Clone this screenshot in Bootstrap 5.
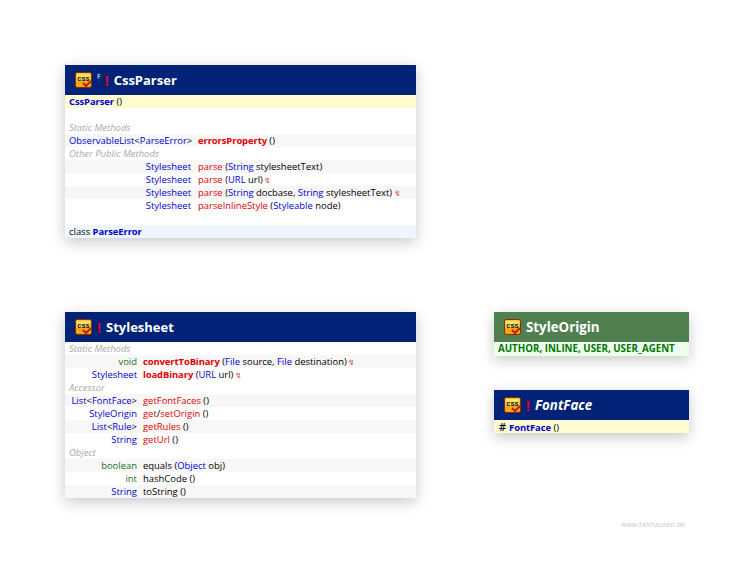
<!DOCTYPE html>
<html lang="en">
<head>
<meta charset="utf-8">
<title>Class diagram</title>
<link href="https://cdn.jsdelivr.net/npm/bootstrap@5.3.0/dist/css/bootstrap.min.css" rel="stylesheet">
<style>
html,body{background:#fff;margin:0}
.canvas{position:relative;width:745px;height:571px;overflow:hidden;font-family:"Open Sans","Noto Sans","Liberation Sans",sans-serif;font-size:9.45px;line-height:13px;color:#000;}
.node{position:absolute;background:#fff;box-shadow:0 4px 14px rgba(0,0,0,.22)}
.n1{left:65px;top:65px;width:351px}
.n2{left:65px;top:312px;width:351px}
.n3{left:494px;top:312px;width:195px}
.n4{left:494px;top:390px;width:195px}
.head{height:30px;background:#002277;color:#fff;font-size:13px;font-weight:700;padding-left:10px;gap:5px}
.head.green{background:#508050;gap:5px}
.head svg{flex:none}
.bang{color:#e0002a;font-weight:700;font-size:14px}
.fin{font-size:7px;line-height:9px;align-self:flex-start;margin-top:7px;margin-right:-1px;font-weight:400}
.ln{display:grid;height:13px;white-space:nowrap;padding-left:4px;align-items:center}
.w1 .ln{grid-template-columns:122px 1fr;column-gap:7px}
.w2 .ln{grid-template-columns:68px 1fr;column-gap:6px}
.ln.full{display:block}
.alt{background:#f7f7f7}
.ty{text-align:right}
.sec{color:#a8a8a8;font-style:italic}
.k{color:#0000d0}
.r{color:#e00000}
.g{color:#207020}
.b{font-weight:700;letter-spacing:-.1px}
.ctor{background:#fffbd0}
.cls{background:#eef6ff}
.en{background:#eeffee;color:#007700;font-weight:700;height:14px;font-size:9.75px}
.zz{color:#e05050;font-size:8px;margin-left:-1px}
.hash{font-size:11px;font-weight:600;color:#000;margin:0 3px 0 1px}
.wm{position:absolute;left:621px;top:520px;font-size:7px;line-height:10px;color:#c9c9d6}
.ico text{font-family:"Liberation Sans",sans-serif;font-size:7.5px;font-weight:700;fill:#111}
.big{font-size:13.3px}
</style>
</head>
<body>
<div class="canvas">

<div class="node n1 w1">
<div class="head d-flex align-items-center"><svg class="ico" width="17" height="16" viewBox="0 0 17 16"><rect x=".5" y=".5" width="16" height="15" rx="2" fill="#f0a818" stroke="#902800"/><rect x="1.5" y="1.5" width="14" height="7" fill="#ffe060"/><path d="M8 11l3 3 5-5" fill="none" stroke="#c02000" stroke-width="2"/><text x="8.5" y="9" text-anchor="middle">css</text></svg><span class="fin">F</span><span class="bang">!</span><span>CssParser</span></div>
<div class="ln full ctor"><span class="k b">CssParser</span> ()</div>
<div class="ln"></div>
<div class="ln full sec">Static Methods</div>
<div class="ln alt"><span class="ty"><span class="k">ObservableList</span>&lt;<span class="k">ParseError</span>&gt;</span><span><span class="r b">errorsProperty</span> ()</span></div>
<div class="ln full sec">Other Public Methods</div>
<div class="ln alt"><span class="ty k">Stylesheet</span><span><span class="r">parse</span> (<span class="k">String</span> stylesheetText)</span></div>
<div class="ln"><span class="ty k">Stylesheet</span><span><span class="r">parse</span> (<span class="k">URL</span> url) <span class="zz">↯</span></span></div>
<div class="ln alt"><span class="ty k">Stylesheet</span><span><span class="r">parse</span> (<span class="k">String</span> docbase, <span class="k">String</span> stylesheetText) <span class="zz">↯</span></span></div>
<div class="ln"><span class="ty k">Stylesheet</span><span><span class="r">parseInlineStyle</span> (<span class="k">Styleable</span> node)</span></div>
<div class="ln"></div>
<div class="ln full cls">class <span class="k b">ParseError</span></div>
</div>

<div class="node n2 w2">
<div class="head d-flex align-items-center"><svg class="ico" width="17" height="16" viewBox="0 0 17 16"><rect x=".5" y=".5" width="16" height="15" rx="2" fill="#f0a818" stroke="#902800"/><rect x="1.5" y="1.5" width="14" height="7" fill="#ffe060"/><path d="M8 11l3 3 5-5" fill="none" stroke="#c02000" stroke-width="2"/><text x="8.5" y="9" text-anchor="middle">css</text></svg><span class="bang">!</span><span>Stylesheet</span></div>
<div class="ln full sec">Static Methods</div>
<div class="ln alt"><span class="ty g">void</span><span><span class="r b">convertToBinary</span> (<span class="k">File</span> source, <span class="k">File</span> destination) <span class="zz">↯</span></span></div>
<div class="ln"><span class="ty k">Stylesheet</span><span><span class="r b">loadBinary</span> (<span class="k">URL</span> url) <span class="zz">↯</span></span></div>
<div class="ln full sec">Accessor</div>
<div class="ln alt"><span class="ty"><span class="k">List</span>&lt;<span class="k">FontFace</span>&gt;</span><span><span class="r">getFontFaces</span> ()</span></div>
<div class="ln"><span class="ty k">StyleOrigin</span><span><span class="r">get</span>/<span class="r">setOrigin</span> ()</span></div>
<div class="ln alt"><span class="ty"><span class="k">List</span>&lt;<span class="k">Rule</span>&gt;</span><span><span class="r">getRules</span> ()</span></div>
<div class="ln"><span class="ty k">String</span><span><span class="r">getUrl</span> ()</span></div>
<div class="ln full sec">Object</div>
<div class="ln alt"><span class="ty g">boolean</span><span>equals (<span class="k">Object</span> obj)</span></div>
<div class="ln"><span class="ty g">int</span><span>hashCode ()</span></div>
<div class="ln alt"><span class="ty k">String</span><span>toString ()</span></div>
</div>

<div class="node n3">
<div class="head green d-flex align-items-center"><svg class="ico" width="17" height="16" viewBox="0 0 17 16"><rect x=".5" y=".5" width="16" height="15" rx="2" fill="#f0a818" stroke="#902800"/><rect x="1.5" y="1.5" width="14" height="7" fill="#ffe060"/><path d="M8 11l3 3 5-5" fill="none" stroke="#c02000" stroke-width="2"/><text x="8.5" y="9" text-anchor="middle">css</text></svg><span class="big">StyleOrigin</span></div>
<div class="ln full en">AUTHOR, INLINE, USER, USER_AGENT</div>
</div>

<div class="node n4">
<div class="head d-flex align-items-center"><svg class="ico" width="17" height="16" viewBox="0 0 17 16"><rect x=".5" y=".5" width="16" height="15" rx="2" fill="#f0a818" stroke="#902800"/><rect x="1.5" y="1.5" width="14" height="7" fill="#ffe060"/><path d="M8 11l3 3 5-5" fill="none" stroke="#c02000" stroke-width="2"/><text x="8.5" y="9" text-anchor="middle">css</text></svg><span class="bang">!</span><span class="fst-italic big">FontFace</span></div>
<div class="ln full ctor"><span class="hash">#</span><span class="k b">FontFace</span> ()</div>
</div>

<div class="wm">www.falkhausen.de</div>
</div>
</body>
</html>
